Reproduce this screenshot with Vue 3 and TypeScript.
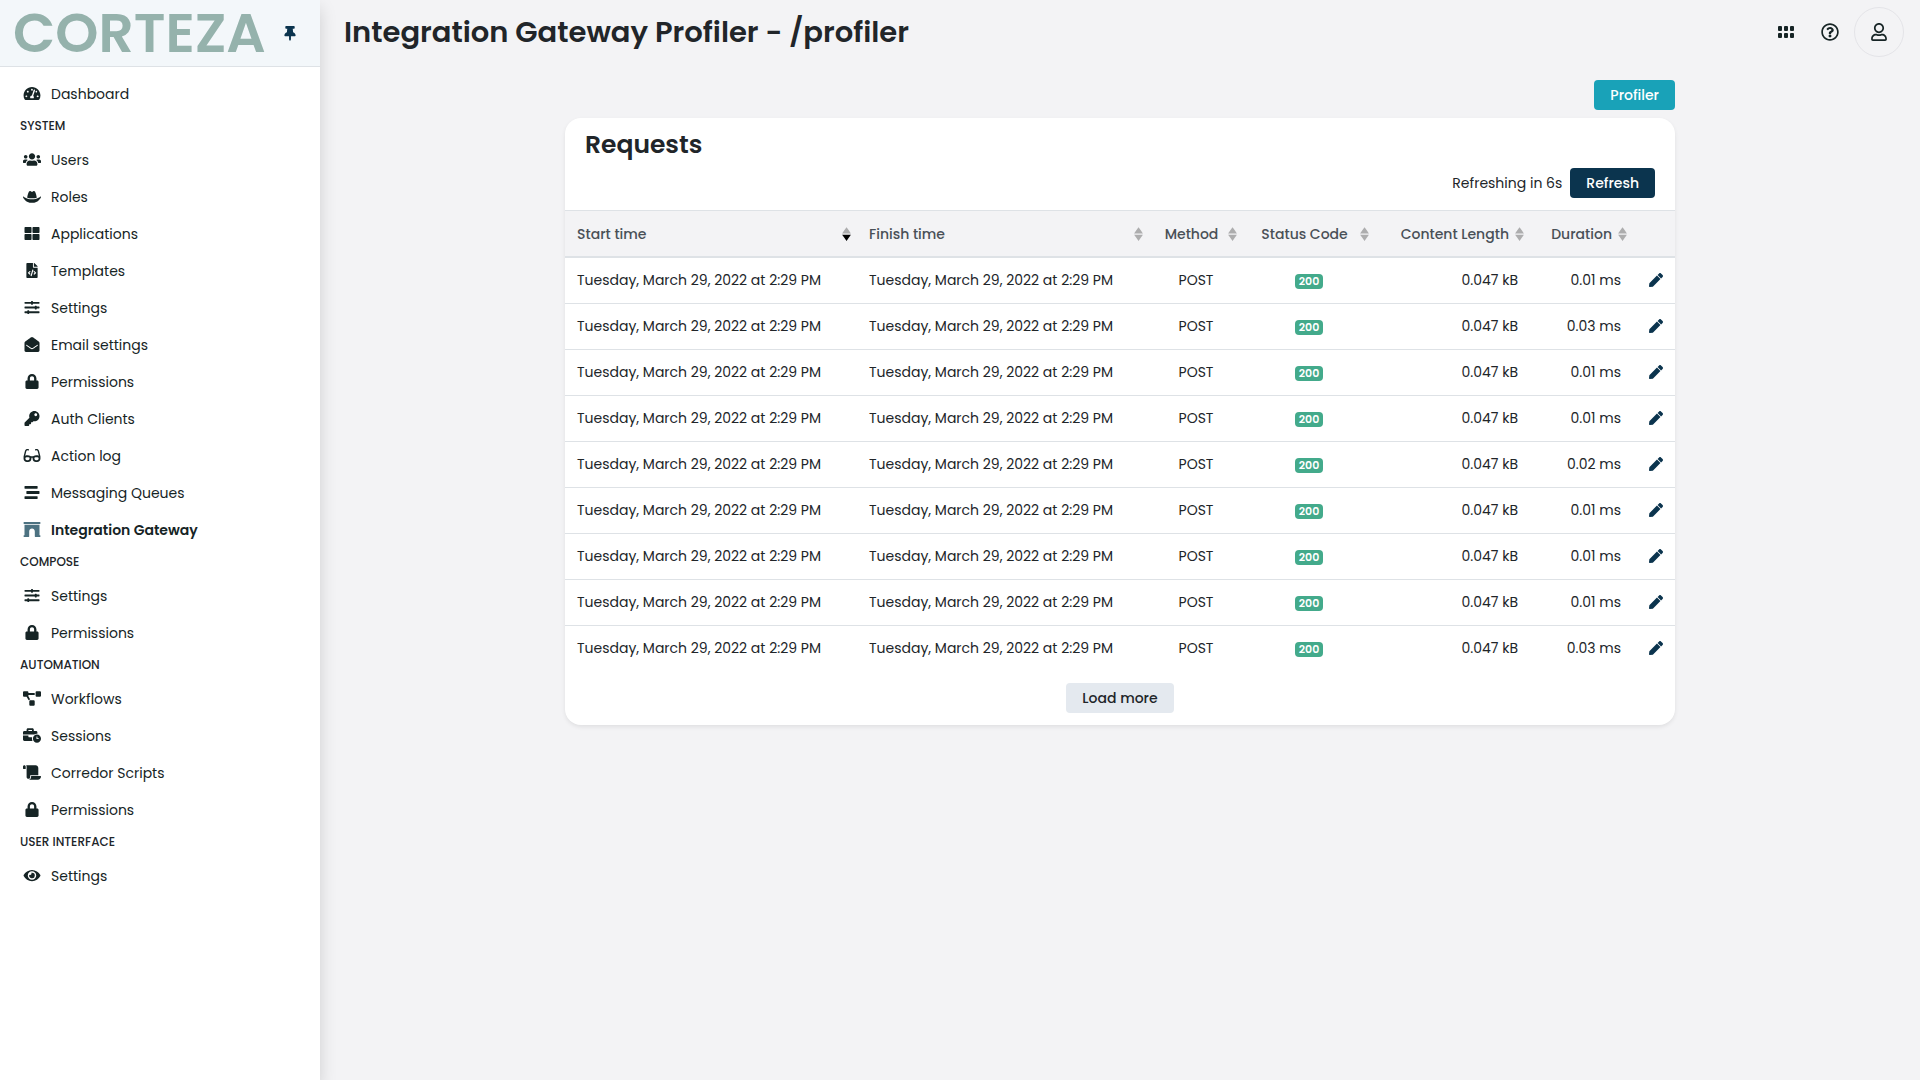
<script setup lang="ts">
import { ref } from 'vue'

interface Icon { box: string; d: string }
interface NavItem { label: string; icon: string; active?: boolean }
interface NavSection { title?: string; items: NavItem[] }
interface Column { key: string; label: string; align: 'left' | 'center' | 'right' }
interface RequestRow { start: string; finish: string; method: string; status: number; size: string; duration: string }

const icons: Record<string, Icon> = {
  pin: { box: '0 0 384 512', d: 'M298.028 214.267L285.793 96H328c13.255 0 24-10.745 24-24V24c0-13.255-10.745-24-24-24H56C42.745 0 32 10.745 32 24v48c0 13.255 10.745 24 24 24h42.207L85.972 214.267C37.465 236.82 0 277.261 0 328c0 13.255 10.745 24 24 24h136v104.007c0 1.242.289 2.467.845 3.578l24 48c2.941 5.882 11.364 5.893 14.311 0l24-48a8.008 8.008 0 0 0 .845-3.578V352h136c13.255 0 24-10.745 24-24-.001-51.183-37.983-91.42-85.973-113.733z' },
  dashboard: { box: '0 0 576 512', d: 'M288 32C128.94 32 0 160.94 0 320c0 52.8 14.25 102.26 39.06 144.8 5.61 9.62 16.3 15.2 27.44 15.2h443c11.14 0 21.83-5.58 27.44-15.2C561.75 422.26 576 372.8 576 320c0-159.06-128.94-288-288-288zm0 64c14.71 0 26.58 10.13 30.32 23.65-1.11 2.26-2.64 4.23-3.45 6.67l-9.22 27.67c-5.13 3.49-10.97 6.01-17.64 6.01-17.67 0-32-14.33-32-32S270.33 96 288 96zM96 384c-17.67 0-32-14.33-32-32s14.33-32 32-32 32 14.33 32 32-14.33 32-32 32zm48-160c-17.67 0-32-14.33-32-32s14.33-32 32-32 32 14.33 32 32-14.33 32-32 32zm246.77-72.41l-61.33 184C343.13 347.33 352 364.54 352 384c0 11.72-3.38 22.55-8.88 32H232.88c-5.5-9.45-8.88-20.28-8.88-32 0-33.94 26.5-61.43 59.9-63.59l61.34-184.01c4.17-12.56 17.73-19.45 30.36-15.17 12.57 4.19 19.35 17.79 15.17 30.36zm14.66 57.2l15.52-46.55c3.47-1.29 7.13-2.23 11.05-2.23 17.67 0 32 14.33 32 32s-14.33 32-32 32c-11.38-.01-20.89-6.28-26.57-15.22zM480 384c-17.67 0-32-14.33-32-32s14.33-32 32-32 32 14.33 32 32-14.33 32-32 32z' },
  users: { box: '0 0 640 512', d: 'M96 224c35.3 0 64-28.7 64-64s-28.7-64-64-64-64 28.7-64 64 28.7 64 64 64zm448 0c35.3 0 64-28.7 64-64s-28.7-64-64-64-64 28.7-64 64 28.7 64 64 64zm32 32h-64c-17.6 0-33.5 7.1-45.1 18.6 40.3 22.1 68.9 62 75.1 109.4h66c17.7 0 32-14.3 32-32v-32c0-35.3-28.7-64-64-64zm-256 0c61.9 0 112-50.1 112-112S381.9 32 320 32 208 82.1 208 144s50.1 112 112 112zm76.8 32h-8.3c-20.8 10-43.9 16-68.5 16s-47.6-6-68.5-16h-8.3C179.6 288 128 339.6 128 403.2V432c0 26.5 21.5 48 48 48h288c26.5 0 48-21.5 48-48v-28.8c0-63.6-51.6-115.2-115.2-115.2zm-223.7-13.4C161.5 263.1 145.6 256 128 256H64c-35.3 0-64 28.7-64 64v32c0 17.7 14.3 32 32 32h65.9c6.3-47.4 34.9-87.3 75.2-109.4z' },
  hat: { box: '0 0 640 512', d: 'M490 296.9C480.51 239.51 450.51 64 392.3 64c-14 0-26.49 5.93-37 14a58.21 58.21 0 0 1-70.58 0c-10.51-8-23-14-37-14-58.2 0-88.2 175.47-97.71 232.88C188.81 309.47 243.73 320 320 320s131.23-10.51 170-23.1zm142.9-37.18a16 16 0 0 0-19.75 1.5c-1 .9-101.27 90.78-293.16 90.78-190.82 0-292.22-89.94-293.24-90.84A16 16 0 0 0 1 278.53C1.73 280.55 78.32 480 320 480s318.27-199.45 319-201.47a16 16 0 0 0-6.09-18.81z' },
  apps: { box: '0 0 512 512', d: 'M296 32h192c13.255 0 24 10.745 24 24v160c0 13.255-10.745 24-24 24H296c-13.255 0-24-10.745-24-24V56c0-13.255 10.745-24 24-24zm-80 0H24C10.745 32 0 42.745 0 56v160c0 13.255 10.745 24 24 24h192c13.255 0 24-10.745 24-24V56c0-13.255-10.745-24-24-24zM0 296v160c0 13.255 10.745 24 24 24h192c13.255 0 24-10.745 24-24V296c0-13.255-10.745-24-24-24H24c-13.255 0-24 10.745-24 24zm296 184h192c13.255 0 24-10.745 24-24V296c0-13.255-10.745-24-24-24H296c-13.255 0-24 10.745-24 24v160c0 13.255 10.745 24 24 24z' },
  template: { box: '0 0 384 512', d: 'M384 121.941V128H256V0h6.059c6.365 0 12.47 2.529 16.971 7.029l97.941 97.941A24.005 24.005 0 0 1 384 121.941zM248 160c-13.2 0-24-10.8-24-24V0H24C10.745 0 0 10.745 0 24v464c0 13.255 10.745 24 24 24h336c13.255 0 24-10.745 24-24V160H248zM123.206 400.505a5.4 5.4 0 0 1-7.633.246l-64.866-60.812a5.4 5.4 0 0 1 0-7.879l64.866-60.812a5.4 5.4 0 0 1 7.633.246l19.579 20.885a5.4 5.4 0 0 1-.372 7.747L101.65 336l40.763 35.874a5.4 5.4 0 0 1 .372 7.747l-19.579 20.884zm51.295 50.479l-27.453-7.97a5.402 5.402 0 0 1-3.681-6.692l61.44-211.626a5.402 5.402 0 0 1 6.692-3.681l27.452 7.97a5.4 5.4 0 0 1 3.68 6.692l-61.44 211.626a5.397 5.397 0 0 1-6.69 3.681zm160.792-111.045l-64.866 60.812a5.4 5.4 0 0 1-7.633-.246l-19.58-20.885a5.4 5.4 0 0 1 .372-7.747L284.35 336l-40.763-35.874a5.4 5.4 0 0 1-.372-7.747l19.58-20.885a5.4 5.4 0 0 1 7.633-.246l64.866 60.812a5.4 5.4 0 0 1-.001 7.879z' },
  sliders: { box: '0 0 512 512', d: 'M496 384H160v-16c0-8.8-7.2-16-16-16h-32c-8.8 0-16 7.2-16 16v16H16c-8.8 0-16 7.2-16 16v32c0 8.8 7.2 16 16 16h80v16c0 8.8 7.2 16 16 16h32c8.8 0 16-7.2 16-16v-16h336c8.8 0 16-7.2 16-16v-32c0-8.8-7.2-16-16-16zm0-160h-80v-16c0-8.8-7.2-16-16-16h-32c-8.8 0-16 7.2-16 16v16H16c-8.8 0-16 7.2-16 16v32c0 8.8 7.2 16 16 16h336v16c0 8.8 7.2 16 16 16h32c8.8 0 16-7.2 16-16v-16h80c8.8 0 16-7.2 16-16v-32c0-8.8-7.2-16-16-16zm0-160H288V48c0-8.8-7.2-16-16-16h-32c-8.8 0-16 7.2-16 16v16H16C7.2 64 0 71.2 0 80v32c0 8.8 7.2 16 16 16h208v16c0 8.8 7.2 16 16 16h32c8.8 0 16-7.2 16-16v-16h208c8.8 0 16-7.2 16-16V80c0-8.8-7.2-16-16-16z' },
  envelope: { box: '0 0 512 512', d: 'M512 464c0 26.51-21.49 48-48 48H48c-26.51 0-48-21.49-48-48V200.724a48 48 0 0 1 18.387-37.776c24.913-19.529 45.501-35.365 164.2-121.511C199.412 29.17 232.797-.347 256 .003c23.198-.354 56.596 29.172 73.413 41.433 118.687 86.137 139.303 101.995 164.2 121.512A48 48 0 0 1 512 200.724V464zm-65.666-196.605c-2.563-3.728-7.7-4.595-11.339-1.907-22.845 16.873-55.462 40.705-105.582 77.079-16.825 12.266-50.21 41.781-73.413 41.43-23.211.344-56.559-29.143-73.413-41.43-50.114-36.37-82.734-60.204-105.582-77.079-3.639-2.688-8.776-1.821-11.339 1.907l-9.072 13.196a7.998 7.998 0 0 0 1.839 10.967c22.887 16.899 55.454 40.69 105.303 76.868 20.274 14.781 56.524 47.813 92.264 47.573 35.724.242 71.961-32.771 92.263-47.573 49.85-36.179 82.418-59.97 105.303-76.868a7.998 7.998 0 0 0 1.839-10.967l-9.071-13.196z' },
  lock: { box: '0 0 448 512', d: 'M400 224h-24v-72C376 68.2 307.8 0 224 0S72 68.2 72 152v72H48c-26.5 0-48 21.5-48 48v192c0 26.5 21.5 48 48 48h352c26.5 0 48-21.5 48-48V272c0-26.5-21.5-48-48-48zm-104 0H152v-72c0-39.7 32.3-72 72-72s72 32.3 72 72v72z' },
  key: { box: '0 0 512 512', d: 'M512 176.001C512 273.203 433.202 352 336 352c-11.22 0-22.19-1.062-32.827-3.069l-24.012 27.014A23.999 23.999 0 0 1 261.223 384H224v40c0 13.255-10.745 24-24 24h-40v40c0 13.255-10.745 24-24 24H24c-13.255 0-24-10.745-24-24v-78.059c0-6.365 2.529-12.47 7.029-16.971l161.802-161.802C163.108 213.814 160 195.271 160 176 160 78.798 238.797.001 335.999 0 433.488-.001 512 78.511 512 176.001zM336 128c0 26.51 21.49 48 48 48s48-21.49 48-48-21.49-48-48-48-48 21.49-48 48z' },
  glasses: { box: '0 0 576 512', d: 'M574.1 280.37L528.75 98.66c-5.91-23.7-21.59-44.05-43-55.81-21.44-11.73-46.97-14.11-70.19-6.33l-15.25 5.08c-8.39 2.79-12.92 11.86-10.12 20.24l5.06 15.18c2.79 8.38 11.85 12.91 20.23 10.12l13.18-4.39c10.87-3.62 23-3.57 33.16 1.73 10.29 5.37 17.57 14.56 20.37 25.82l38.46 153.82c-22.19-6.81-49.79-12.46-81.2-12.46-34.77 0-73.98 7.02-114.85 26.74h-73.18c-40.87-19.74-80.08-26.75-114.86-26.75-31.42 0-59.02 5.65-81.21 12.46l38.46-153.83c2.79-11.25 10.09-20.45 20.38-25.81 10.16-5.3 22.28-5.35 33.15-1.73l13.17 4.39c8.38 2.79 17.44-1.74 20.23-10.12l5.06-15.18c2.8-8.38-1.73-17.45-10.12-20.24l-15.25-5.08c-23.22-7.78-48.75-5.41-70.19 6.33-21.41 11.77-37.09 32.11-43 55.8L1.9 280.37A64.218 64.218 0 0 0 0 295.86v70.25C0 429.01 51.58 480 115.2 480h37.12c60.28 0 110.37-45.94 114.88-105.37l2.93-38.63h35.75l2.93 38.63C313.31 434.06 363.4 480 423.68 480h37.12c63.62 0 115.2-50.99 115.2-113.88v-70.25c0-5.23-.64-10.43-1.9-15.5zm-370.72 89.42c-1.97 25.91-24.4 46.21-51.06 46.21H115.2C86.97 416 64 393.62 64 366.11v-37.54c18.12-6.49 43.42-12.92 72.58-12.92 23.86 0 47.26 4.33 69.93 12.92l-3.13 41.22zM512 366.12c0 27.51-22.97 49.88-51.2 49.88h-37.12c-26.67 0-49.1-20.3-51.06-46.21l-3.13-41.22c22.67-8.59 46.08-12.92 69.95-12.92 29.12 0 54.43 6.44 72.55 12.93v37.54z' },
  stream: { box: '0 0 512 512', d: 'M16 128h416c8.84 0 16-7.16 16-16V48c0-8.84-7.16-16-16-16H16C7.16 32 0 39.16 0 48v64c0 8.84 7.16 16 16 16zm480 80H80c-8.84 0-16 7.16-16 16v64c0 8.84 7.16 16 16 16h416c8.84 0 16-7.16 16-16v-64c0-8.84-7.16-16-16-16zm-64 176H16c-8.84 0-16 7.16-16 16v64c0 8.84 7.16 16 16 16h416c8.84 0 16-7.16 16-16v-64c0-8.84-7.16-16-16-16z' },
  archway: { box: '0 0 576 512', d: 'M560 448h-16V96H32v352H16.02c-8.84 0-16 7.16-16 16v32c0 8.84 7.16 16 16 16H176c8.84 0 16-7.16 16-16V320c0-53.02 42.98-96 96-96s96 42.98 96 96l.02 160v16c0 8.84 7.16 16 16 16H560c8.84 0 16-7.16 16-16v-32c0-8.84-7.16-16-16-16zm0-448H16C7.16 0 0 7.16 0 16v32c0 8.84 7.16 16 16 16h544c8.84 0 16-7.16 16-16V16c0-8.84-7.16-16-16-16z' },
  diagram: { box: '0 0 640 512', d: 'M384 320H256c-17.67 0-32 14.33-32 32v128c0 17.67 14.33 32 32 32h128c17.67 0 32-14.33 32-32V352c0-17.67-14.33-32-32-32zM192 32c0-17.67-14.33-32-32-32H32C14.33 0 0 14.33 0 32v128c0 17.67 14.33 32 32 32h95.72l73.16 128.04C211.98 300.98 232.4 288 256 288h.28L192 175.51V128h224V64H192V32zM608 0H480c-17.67 0-32 14.33-32 32v128c0 17.67 14.33 32 32 32h128c17.67 0 32-14.33 32-32V32c0-17.67-14.33-32-32-32z' },
  sessions: { box: '0 0 640 512', d: 'M496 224c-79.59 0-144 64.41-144 144s64.41 144 144 144 144-64.41 144-144-64.41-144-144-144zm64 150.29c0 5.34-4.37 9.71-9.71 9.71h-60.57c-5.34 0-9.71-4.37-9.71-9.71v-76.57c0-5.34 4.37-9.71 9.71-9.71h12.57c5.34 0 9.71 4.37 9.71 9.71V352h38.29c5.34 0 9.71 4.37 9.71 9.71v12.58zM496 192c5.4 0 10.72.33 16 .81V144c0-25.6-22.4-48-48-48h-80V48c0-25.6-22.4-48-48-48H176c-25.6 0-48 22.4-48 48v48H48c-25.6 0-48 22.4-48 48v80h395.12c28.6-20.09 63.35-32 100.88-32zM320 96H192V64h128v32zm6.82 224H208c-8.84 0-16-7.16-16-16v-48H0v144c0 25.6 22.4 48 48 48h291.43C327.1 423.96 320 396.82 320 368c0-16.66 2.48-32.72 6.82-48z' },
  scroll: { box: '0 0 640 512', d: 'M48 0C21.53 0 0 21.53 0 48v64c0 8.84 7.16 16 16 16h80V48C96 21.53 74.47 0 48 0zm208 412.57V352h288V96c0-52.94-43.06-96-96-96H111.59C121.74 13.41 128 29.92 128 48v368c0 38.87 34.65 69.65 74.75 63.12C234.22 474 256 444.46 256 412.57zM288 384v32c0 52.93-43.06 96-96 96h336c61.86 0 112-50.14 112-112 0-8.84-7.16-16-16-16H288z' },
  eye: { box: '0 0 576 512', d: 'M572.52 241.4C518.29 135.59 410.93 64 288 64S57.68 135.64 3.48 241.41a32.35 32.35 0 0 0 0 29.19C57.71 376.41 165.07 448 288 448s230.32-71.64 284.52-177.41a32.35 32.35 0 0 0 0-29.19zM288 400a144 144 0 1 1 144-144 143.93 143.93 0 0 1-144 144zm0-240a95.31 95.31 0 0 0-25.31 3.79 47.85 47.85 0 0 1-66.9 66.9A95.78 95.78 0 1 0 288 160z' },
  help: { box: '0 0 512 512', d: 'M256 8C119.043 8 8 119.083 8 256c0 136.997 111.043 248 248 248s248-111.003 248-248C504 119.083 392.957 8 256 8zm0 448c-110.532 0-200-89.431-200-200 0-110.495 89.472-200 200-200 110.491 0 200 89.471 200 200 0 110.53-89.431 200-200 200zm107.244-255.2c0 67.052-72.421 68.084-72.421 92.863V300c0 6.627-5.373 12-12 12h-45.647c-6.627 0-12-5.373-12-12v-8.659c0-35.745 27.1-50.034 47.579-61.516 17.561-9.845 28.324-16.541 28.324-29.579 0-17.246-21.999-28.693-39.784-28.693-23.189 0-33.894 10.977-48.942 29.969-4.057 5.12-11.46 6.071-16.666 2.124l-27.824-21.098c-5.107-3.872-6.251-11.066-2.644-16.363C184.846 131.491 214.94 112 261.794 112c49.071 0 101.45 38.304 101.45 88.8zM298 368c0 23.159-18.841 42-42 42s-42-18.841-42-42 18.841-42 42-42 42 18.841 42 42z' },
  user: { box: '0 0 448 512', d: 'M313.6 304c-28.7 0-42.5 16-89.6 16-47.1 0-60.8-16-89.6-16C60.2 304 0 364.2 0 438.4V464c0 26.5 21.5 48 48 48h352c26.5 0 48-21.5 48-48v-25.6c0-74.2-60.2-134.4-134.4-134.4zM400 464H48v-25.6c0-47.6 38.8-86.4 86.4-86.4 14.6 0 38.3 16 89.6 16 51.7 0 74.9-16 89.6-16 47.6 0 86.4 38.8 86.4 86.4V464zM224 288c79.5 0 144-64.5 144-144S303.5 0 224 0 80 64.5 80 144s64.5 144 144 144zm0-240c52.9 0 96 43.1 96 96s-43.1 96-96 96-96-43.1-96-96 43.1-96 96-96z' },
  pen: { box: '0 0 512 512', d: 'M290.74 93.24l128.02 128.02-277.99 277.99-114.14 12.6C11.35 513.54-1.56 500.62.14 485.34l12.7-114.22 277.9-277.88zm207.2-19.06l-60.11-60.11c-18.75-18.75-49.16-18.75-67.91 0l-56.55 56.55 128.02 128.02 56.55-56.55c18.75-18.76 18.75-49.16 0-67.91z' },
}

const sections: NavSection[] = [
  { items: [{ label: 'Dashboard', icon: 'dashboard' }] },
  {
    title: 'System',
    items: [
      { label: 'Users', icon: 'users' },
      { label: 'Roles', icon: 'hat' },
      { label: 'Applications', icon: 'apps' },
      { label: 'Templates', icon: 'template' },
      { label: 'Settings', icon: 'sliders' },
      { label: 'Email settings', icon: 'envelope' },
      { label: 'Permissions', icon: 'lock' },
      { label: 'Auth Clients', icon: 'key' },
      { label: 'Action log', icon: 'glasses' },
      { label: 'Messaging Queues', icon: 'stream' },
      { label: 'Integration Gateway', icon: 'archway', active: true },
    ],
  },
  {
    title: 'Compose',
    items: [
      { label: 'Settings', icon: 'sliders' },
      { label: 'Permissions', icon: 'lock' },
    ],
  },
  {
    title: 'Automation',
    items: [
      { label: 'Workflows', icon: 'diagram' },
      { label: 'Sessions', icon: 'sessions' },
      { label: 'Corredor Scripts', icon: 'scroll' },
      { label: 'Permissions', icon: 'lock' },
    ],
  },
  { title: 'User Interface', items: [{ label: 'Settings', icon: 'eye' }] },
]

const columns: Column[] = [
  { key: 'start', label: 'Start time', align: 'left' },
  { key: 'finish', label: 'Finish time', align: 'left' },
  { key: 'method', label: 'Method', align: 'center' },
  { key: 'status', label: 'Status Code', align: 'center' },
  { key: 'size', label: 'Content Length', align: 'right' },
  { key: 'duration', label: 'Duration', align: 'right' },
]

const stamp = 'Tuesday, March 29, 2022 at 2:29 PM'
const durations = ['0.01', '0.03', '0.01', '0.01', '0.02', '0.01', '0.01', '0.01', '0.03']
const rows: RequestRow[] = durations.map((value) => ({
  start: stamp,
  finish: stamp,
  method: 'POST',
  status: 200,
  size: '0.047 kB',
  duration: `${value} ms`,
}))

const sortBy = ref('start')
const secondsLeft = ref(6)
</script>

<template>
  <div class="app">
    <aside class="sidebar">
      <header class="brand">
        <span class="logo">CORTEZA</span>
        <button class="plain pin" type="button" aria-label="Pin sidebar">
          <svg class="icon" :viewBox="icons.pin.box"><path :d="icons.pin.d" /></svg>
        </button>
      </header>
      <nav class="nav">
        <template v-for="(section, s) in sections" :key="s">
          <h2 v-if="section.title" class="nav-title">{{ section.title }}</h2>
          <a
            v-for="item in section.items"
            :key="item.label"
            href="#"
            class="nav-item"
            :class="{ active: item.active }"
          >
            <svg class="icon" :viewBox="icons[item.icon].box"><path :d="icons[item.icon].d" /></svg>
            <span>{{ item.label }}</span>
          </a>
        </template>
      </nav>
    </aside>

    <main class="main">
      <header class="topbar">
        <h1 class="title">Integration Gateway Profiler - /profiler</h1>
        <div class="tools">
          <button class="plain tool" type="button" aria-label="Applications">
            <svg class="grid" viewBox="0 0 16 12">
              <rect v-for="n in 6" :key="n" :x="((n - 1) % 3) * 6" :y="n > 3 ? 7 : 0" width="4" height="5" rx="1" />
            </svg>
          </button>
          <button class="plain tool" type="button" aria-label="Help">
            <svg class="glyph" :viewBox="icons.help.box"><path :d="icons.help.d" /></svg>
          </button>
          <button class="plain avatar" type="button" aria-label="Profile">
            <svg class="glyph" :viewBox="icons.user.box"><path :d="icons.user.d" /></svg>
          </button>
        </div>
      </header>

      <div class="container">
        <div class="actions">
          <button class="btn info" type="button">Profiler</button>
        </div>

        <section class="card">
          <header class="card-head">
            <h2 class="card-title">Requests</h2>
            <div class="refresh">
              <span>Refreshing in {{ secondsLeft }}s</span>
              <button class="btn primary" type="button">Refresh</button>
            </div>
          </header>

          <table class="table">
            <colgroup>
              <col />
              <col />
              <col class="w-method" />
              <col class="w-status" />
              <col class="w-size" />
              <col class="w-duration" />
              <col class="w-edit" />
            </colgroup>
            <thead>
              <tr>
                <th v-for="col in columns" :key="col.key" scope="col" :class="col.align">
                  <div class="th">
                    <span class="th-label">{{ col.label }}</span>
                    <svg class="sort" viewBox="0 0 101 101" preserveAspectRatio="none">
                      <path class="arrow" d="M51 1l25 23 24 22H1l25-22z" />
                      <path
                        class="arrow"
                        :class="{ on: sortBy === col.key }"
                        d="M51 101l25-23 24-22H1l25 22z"
                      />
                    </svg>
                  </div>
                </th>
                <th aria-label="Edit"></th>
              </tr>
            </thead>
            <tbody>
              <tr v-for="(row, r) in rows" :key="r">
                <td>{{ row.start }}</td>
                <td>{{ row.finish }}</td>
                <td class="center">{{ row.method }}</td>
                <td class="center"><span class="badge">{{ row.status }}</span></td>
                <td class="right">{{ row.size }}</td>
                <td class="right">{{ row.duration }}</td>
                <td class="edit">
                  <a href="#" aria-label="Open request">
                    <svg :viewBox="icons.pen.box"><path :d="icons.pen.d" /></svg>
                  </a>
                </td>
              </tr>
            </tbody>
          </table>

          <footer class="card-foot">
            <button class="btn light" type="button">Load more</button>
          </footer>
        </section>
      </div>
    </main>
  </div>
</template>

<style>
body {
  background: #f3f3f5;
}
</style>

<style scoped>
.app {
  display: flex;
  min-height: 100vh;
  background: #f3f3f5;
  color: #212529;
  font-family: Poppins, Inter, sans-serif;
  font-size: 14px;
  line-height: 22px;
}

.app *,
.app {
  box-sizing: border-box;
}

svg {
  display: block;
  fill: currentColor;
}

.plain {
  display: flex;
  align-items: center;
  justify-content: center;
  padding: 0;
  border: 0;
  background: none;
  color: #162425;
  cursor: pointer;
}

.sidebar {
  flex: 0 0 320px;
  background: #fff;
  box-shadow: 0 8px 16px rgba(0, 0, 0, 0.15);
}

.brand {
  display: flex;
  align-items: center;
  justify-content: space-between;
  height: 67px;
  padding: 0 20px 0 13px;
  border-bottom: 1px solid #dee2e6;
  background: #f3f7fa;
}

.logo {
  color: #95b2ac;
  font-size: 55px;
  font-weight: 600;
  line-height: 66px;
}

.pin {
  width: 20px;
  height: 30px;
  color: #0b344e;
}

.icon {
  flex: none;
  width: 18px;
  height: 15px;
}

.nav {
  padding-top: 8px;
}

.nav-title {
  margin: 0;
  padding: 0 20px 2px;
  font-size: 12px;
  font-weight: 500;
  line-height: 27px;
  text-transform: uppercase;
}

.nav-item {
  display: flex;
  align-items: center;
  gap: 10px;
  height: 37px;
  padding: 0 23px;
  color: #162425;
  text-decoration: none;
}

.nav-item.active {
  font-weight: 600;
}

.nav-item.active .icon {
  color: #4d7281;
}

.main {
  flex: 1;
  min-width: 0;
}

.topbar {
  display: flex;
  align-items: center;
  justify-content: space-between;
  height: 64px;
  padding: 0 16px 0 24px;
}

.title {
  margin: 0;
  font-size: 29px;
  font-weight: 600;
  line-height: 40px;
}

.tools {
  display: flex;
  align-items: center;
}

.tool {
  width: 44px;
  height: 44px;
}

.grid {
  width: 16px;
  height: 12px;
}

.glyph {
  width: 18px;
  height: 18px;
}

.avatar {
  width: 50px;
  height: 50px;
  margin-left: 2px;
  border: 1px solid #e4e4e8;
  border-radius: 50%;
}

.container {
  max-width: 1110px;
  margin: 0 auto;
  padding: 16px 0;
}

.actions {
  display: flex;
  justify-content: flex-end;
  margin-bottom: 8px;
}

.btn {
  height: 30px;
  padding: 0 16px;
  border: 0;
  border-radius: 4px;
  color: #fff;
  font: inherit;
  font-weight: 500;
  cursor: pointer;
}

.info {
  background: #19a2b8;
}

.primary {
  background: #0b344e;
}

.light {
  background: #e4e9ef;
  color: #212529;
}

.card {
  overflow: hidden;
  border-radius: 16px;
  background: #fff;
  box-shadow: 0 2px 4px rgba(0, 0, 0, 0.08);
}

.card-head {
  padding: 8px 20px 12px;
}

.card-title {
  margin: 0 0 4px;
  font-size: 25px;
  font-weight: 600;
  line-height: 38px;
}

.refresh {
  display: flex;
  align-items: center;
  justify-content: flex-end;
  gap: 8px;
}

.table {
  width: 100%;
  border-collapse: separate;
  border-spacing: 0;
  table-layout: fixed;
}

.w-method { width: 94px; }
.w-status { width: 132px; }
.w-size { width: 155px; }
.w-duration { width: 103px; }
.w-edit { width: 42px; }

th {
  height: 48px;
  padding: 0 6px 0 12px;
  border-top: 1px solid #dee2e6;
  border-bottom: 2px solid #dee2e6;
  background: #f3f3f5;
  color: #495057;
  font-weight: 500;
  text-align: left;
  white-space: nowrap;
}

.th {
  display: flex;
  align-items: center;
  gap: 6px;
}

.th-label {
  flex: 1;
}

.center .th-label {
  text-align: center;
}

.right .th-label {
  text-align: right;
}

.sort {
  flex: none;
  width: 9px;
  height: 14px;
}

.arrow {
  fill: #adadae;
}

.arrow.on {
  fill: #000;
}

td {
  height: 46px;
  padding: 0 12px 1px;
  border-bottom: 1px solid #dee2e6;
  white-space: nowrap;
}

tbody tr:last-child td {
  height: 45px;
  border-bottom: 0;
}

.center {
  text-align: center;
}

.right {
  text-align: right;
}

.badge {
  display: inline-block;
  padding: 0 4px;
  border-radius: 4px;
  background: #43aa8b;
  color: #fff;
  font-size: 11px;
  font-weight: 600;
  line-height: 15px;
  vertical-align: middle;
}

.edit a {
  display: block;
  width: 14px;
  margin-left: auto;
  color: #0b344e;
}

.edit svg {
  width: 14px;
  height: 14px;
}

.card-foot {
  display: flex;
  justify-content: center;
  padding: 12px;
}
</style>
